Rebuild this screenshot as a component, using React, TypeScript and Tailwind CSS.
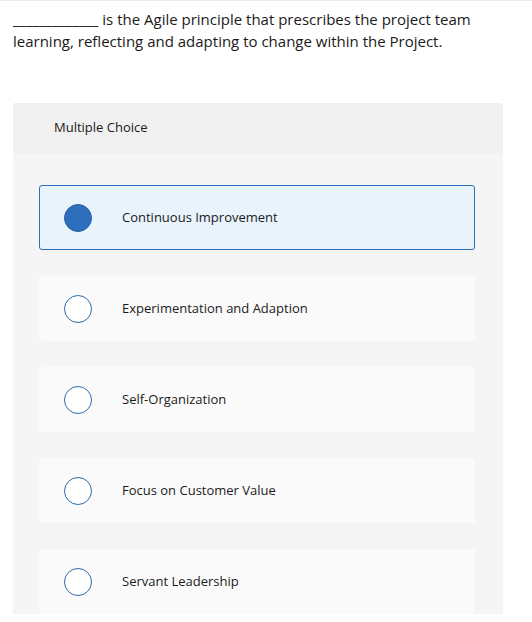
import React from "react";

const options = [
  "Continuous Improvement",
  "Experimentation and Adaption",
  "Self-Organization",
  "Focus on Customer Value",
  "Servant Leadership",
];

export default function App() {
  return (
    <div
      className="w-[532px] h-[622px] bg-white border-t border-[#ececec] text-[#1a1a1a]"
      style={{ fontFamily: '"Open Sans", "Liberation Sans", sans-serif' }}
    >
      <p className="pl-[13px] pr-[20px] pt-[7px] text-[15px] leading-[22px]">
        _____________ is the Agile principle that prescribes the project team learning, reflecting and adapting to change within the Project.
      </p>
      <div className="mt-[51px] ml-[13px] w-[490px] h-[511px] rounded-t-[3px] overflow-hidden bg-[#f5f5f5]">
        <div className="h-[50px] bg-[#f0f0f0] flex items-center pl-[41px] text-[13px]">
          Multiple Choice
        </div>
        <div className="pt-[32px] pl-[26px] pr-[28px] flex flex-col gap-[26px]">
          {options.map((o, i) => (
            <div
              key={o}
              className={
                i === 0
                  ? "h-[65px] rounded-[3px] border border-[#2e6fbd] bg-[#e9f3fc] flex items-center pl-[24px]"
                  : "h-[65px] rounded-[3px] bg-[#fafafa] flex items-center pl-[25px]"
              }
            >
              {i === 0 ? (
                <span className="w-[28px] h-[28px] rounded-full bg-[#2d6fbd] border border-[#2760a6] shrink-0" />
              ) : (
                <span className="w-[28px] h-[28px] rounded-full bg-white border-[1.5px] border-[#2f6aa6] shrink-0" />
              )}
              <span className="ml-[30px] text-[13px] pt-[1px]">{o}</span>
            </div>
          ))}
        </div>
      </div>
    </div>
  );
}
